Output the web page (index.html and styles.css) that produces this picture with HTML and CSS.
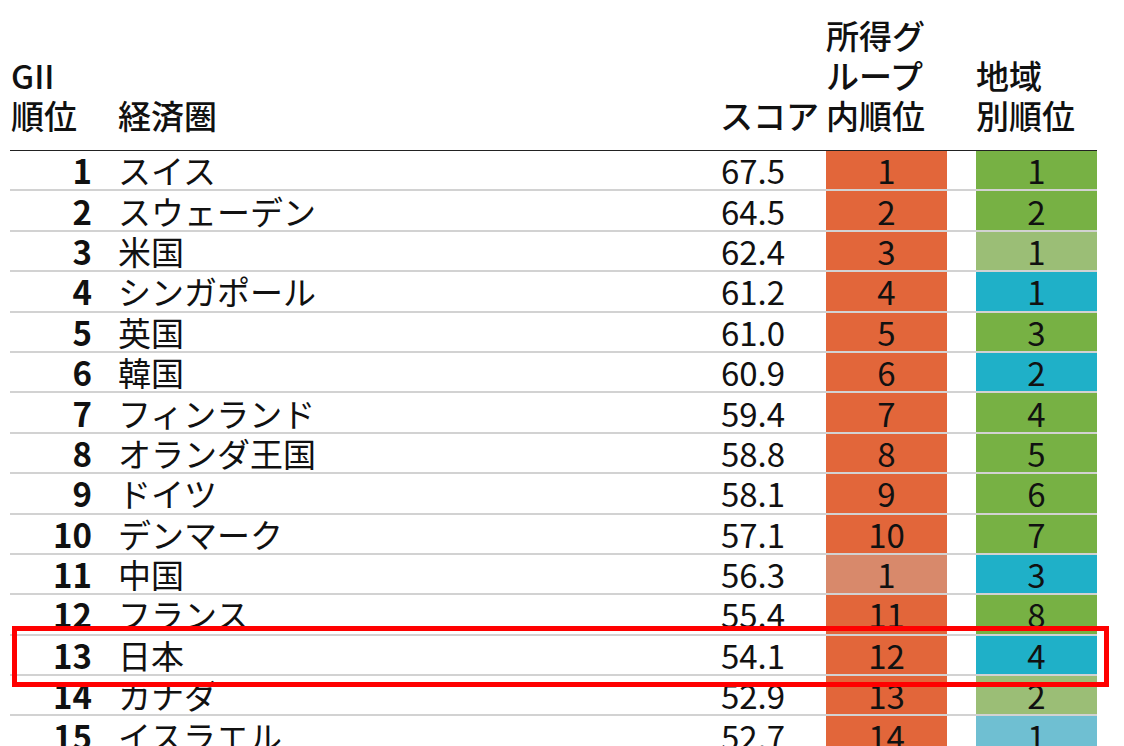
FILE: index.html
```html
<!DOCTYPE html>
<html lang="ja">
<head>
<meta charset="utf-8">
<link rel="stylesheet" href="styles.css">
</head>
<body>
<div class="wrap">
<table class="gii">
<colgroup>
<col class="c-rank"><col class="c-name"><col class="c-score"><col class="c-inc"><col class="c-gap"><col class="c-reg">
</colgroup>
<thead>
<tr>
<th class="h-rank">GII<br>順位</th>
<th class="h-name">経済圏</th>
<th class="h-score">スコア</th>
<th class="h-inc">所得グ<br>ループ<br>内順位</th>
<th class="h-gap"></th>
<th class="h-reg">地域<br>別順位</th>
</tr>
</thead>
<tbody>
<tr><td class="rank">1</td><td class="name">スイス</td><td class="score">67.5</td><td class="inc o">1</td><td class="gap"></td><td class="reg g">1</td></tr>
<tr><td class="rank">2</td><td class="name">スウェーデン</td><td class="score">64.5</td><td class="inc o">2</td><td class="gap"></td><td class="reg g">2</td></tr>
<tr><td class="rank">3</td><td class="name">米国</td><td class="score">62.4</td><td class="inc o">3</td><td class="gap"></td><td class="reg lg">1</td></tr>
<tr><td class="rank">4</td><td class="name">シンガポール</td><td class="score">61.2</td><td class="inc o">4</td><td class="gap"></td><td class="reg t">1</td></tr>
<tr><td class="rank">5</td><td class="name">英国</td><td class="score">61.0</td><td class="inc o">5</td><td class="gap"></td><td class="reg g">3</td></tr>
<tr><td class="rank">6</td><td class="name">韓国</td><td class="score">60.9</td><td class="inc o">6</td><td class="gap"></td><td class="reg t">2</td></tr>
<tr><td class="rank">7</td><td class="name">フィンランド</td><td class="score">59.4</td><td class="inc o">7</td><td class="gap"></td><td class="reg g">4</td></tr>
<tr><td class="rank">8</td><td class="name">オランダ王国</td><td class="score">58.8</td><td class="inc o">8</td><td class="gap"></td><td class="reg g">5</td></tr>
<tr><td class="rank">9</td><td class="name">ドイツ</td><td class="score">58.1</td><td class="inc o">9</td><td class="gap"></td><td class="reg g">6</td></tr>
<tr><td class="rank">10</td><td class="name">デンマーク</td><td class="score">57.1</td><td class="inc o">10</td><td class="gap"></td><td class="reg g">7</td></tr>
<tr><td class="rank">11</td><td class="name">中国</td><td class="score">56.3</td><td class="inc s">1</td><td class="gap"></td><td class="reg t">3</td></tr>
<tr><td class="rank">12</td><td class="name">フランス</td><td class="score">55.4</td><td class="inc o">11</td><td class="gap"></td><td class="reg g">8</td></tr>
<tr><td class="rank">13</td><td class="name">日本</td><td class="score">54.1</td><td class="inc o">12</td><td class="gap"></td><td class="reg t">4</td></tr>
<tr><td class="rank">14</td><td class="name">カナダ</td><td class="score">52.9</td><td class="inc o">13</td><td class="gap"></td><td class="reg lg">2</td></tr>
<tr><td class="rank">15</td><td class="name">イスラエル</td><td class="score">52.7</td><td class="inc o">14</td><td class="gap"></td><td class="reg lt">1</td></tr>
</tbody>
</table>
<div class="highlight"></div>
</div>
</body>
</html>
```

FILE: styles.css
```css
html, body {
  margin: 0;
  padding: 0;
  background: #fff;
  overflow: hidden;
}
body {
  font-family: "Noto Sans CJK JP", "Noto Sans", sans-serif;
  color: #111;
}
.wrap {
  position: relative;
  padding-left: 10px;
  width: 1087px;
}
.gii {
  border-collapse: collapse;
  table-layout: fixed;
  width: 1087px;
  font-size: 33px;
  font-weight: 400;
}
.c-rank { width: 90px; }
.c-name { width: 480px; }
.c-score { width: 246px; }
.c-inc { width: 121px; }
.c-gap { width: 29px; }
.c-reg { width: 121px; }

thead th {
  height: 150px;
  box-sizing: border-box;
  vertical-align: bottom;
  text-align: left;
  font-weight: 500;
  line-height: 40px;
  padding: 0 0 15px 0;
  border-bottom: 1px solid #222;
  white-space: nowrap;
}
.h-rank { padding-left: 1px; }
.h-name { padding-left: 18px; }
.h-score { text-align: right; padding-right: 7px; }

tbody tr { height: 40.4px; }
tbody td {
  padding: 0;
  line-height: 38px;
  border-bottom: 2px solid #d2d2d2;
  vertical-align: middle;
  white-space: nowrap;
}
.rank {
  text-align: right;
  font-weight: bold;
  padding-right: 8px;
}
.name { padding-left: 18px; }
.score { text-align: right; padding-right: 41px; }
.inc, .reg { text-align: center; }
.o { background: #e2663a; }
.s { background: #d8896b; }
.g { background: #77b144; }
.lg { background: #9bbe76; }
.t { background: #1fb0c8; }
.lt { background: #6fbfd2; }

.highlight {
  position: absolute;
  left: 12px;
  top: 626px;
  width: 1097px;
  height: 61px;
  box-sizing: border-box;
  border: 5px solid #ff0000;
  pointer-events: none;
}
```
